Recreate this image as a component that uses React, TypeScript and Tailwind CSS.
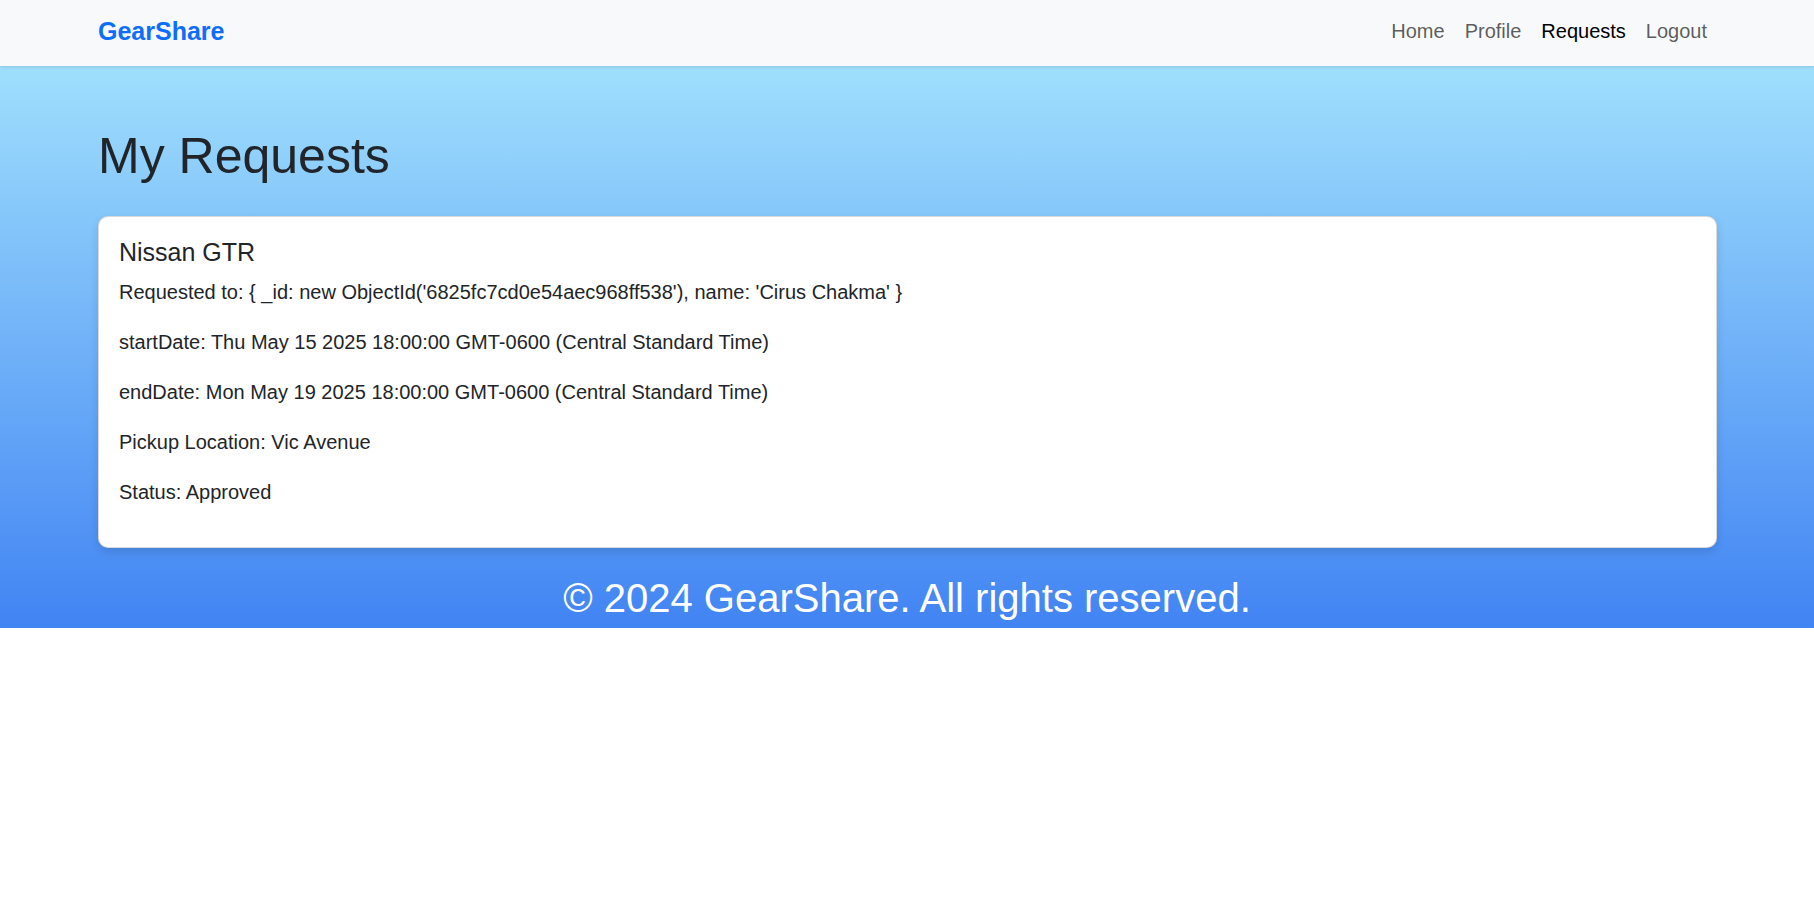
const requests = [
  {
    gear: "Nissan GTR",
    owner: "{ _id: new ObjectId('6825fc7cd0e54aec968ff538'), name: 'Cirus Chakma' }",
    startDate: "Thu May 15 2025 18:00:00 GMT-0600 (Central Standard Time)",
    endDate: "Mon May 19 2025 18:00:00 GMT-0600 (Central Standard Time)",
    pickup: "Vic Avenue",
    status: "Approved",
  },
];

const navItems = [
  { label: "Home", active: false },
  { label: "Profile", active: false },
  { label: "Requests", active: true },
  { label: "Logout", active: false },
];

export default function App() {
  return (
    <div className="min-h-screen bg-white font-['Liberation_Sans',Arial,sans-serif] text-[#212529]">
      {/* Navbar */}
      <nav className="relative z-10 bg-[#f8f9fa] shadow-[0_1px_3px_rgba(0,0,0,0.12)]">
        <div className="flex h-[66px] items-center justify-between pb-[4px] pl-[98px] pr-[97px]">
          <a href="#" className="text-[25px] font-bold leading-[30px] text-[#0d6efd]">
            GearShare
          </a>
          <ul className="flex items-center">
            {navItems.map((item) => (
              <li key={item.label}>
                <a
                  href="#"
                  className={`block px-[10px] text-[20px] leading-[30px] ${
                    item.active ? "text-black" : "text-black/65"
                  }`}
                >
                  {item.label}
                </a>
              </li>
            ))}
          </ul>
        </div>
      </nav>

      {/* Page body */}
      <div className="bg-[linear-gradient(to_bottom,#9fdffd,#4184f3)]">
        <main className="pl-[98px] pr-[97px] pt-[60px]">
          <h1 className="mb-[30px] text-[50px] leading-[60px] font-normal">My Requests</h1>

          {requests.map((req) => (
            <div
              key={req.gear}
              className="mb-[20px] rounded-[10px] border border-black/15 bg-white p-[20px] shadow-[0_4px_10px_rgba(0,0,0,0.12)]"
            >
              <h5 className="mb-[10px] text-[25px] leading-[30px]">{req.gear}</h5>
              <p className="mb-[20px] text-[20px] leading-[30px]">Requested to: {req.owner}</p>
              <p className="mb-[20px] text-[20px] leading-[30px]">startDate: {req.startDate}</p>
              <p className="mb-[20px] text-[20px] leading-[30px]">endDate: {req.endDate}</p>
              <p className="mb-[20px] text-[20px] leading-[30px]">Pickup Location: {req.pickup}</p>
              <p className="mb-[20px] text-[20px] leading-[30px]">Status: {req.status}</p>
            </div>
          ))}
        </main>

        {/* Footer */}
        <footer className="text-center text-[40px] leading-[60px] text-white">
          © 2024 GearShare. All rights reserved.
        </footer>
      </div>
    </div>
  );
}
